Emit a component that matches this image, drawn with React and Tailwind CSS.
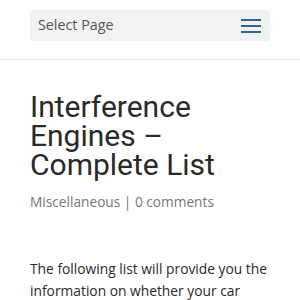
import React from 'react';

const Hamburger = () => (
  <svg width="20" height="16" viewBox="0 0 20 16" className="block">
    <rect x="0" y="1" width="20" height="2" fill="#2f6497" />
    <rect x="0" y="7" width="20" height="2" fill="#2f6497" />
    <rect x="0" y="13" width="20" height="2" fill="#2f6497" />
  </svg>
);

export default function App() {
  return (
    <div className="w-[300px] h-[300px] overflow-hidden bg-white">
      {/* Header */}
      <header className="h-[60px] border-b border-[#e6e6e6] pt-[10px]">
        <div className="mx-auto w-[240px] h-[31px] rounded-[3px] bg-[#f2f2f2] flex items-center justify-between pl-[8px] pr-[9px]">
          <span className="text-[14.3px] text-[#555] font-['Open_Sans',sans-serif] leading-none">Select Page</span>
          <Hamburger />
        </div>
      </header>

      {/* Post */}
      <article className="mx-auto w-[240px] pt-[32px]">
        <h1 className="text-[30px] leading-[29px] text-[#2a2a2a] font-['Roboto',sans-serif]">
          Interference Engines – Complete List
        </h1>
        <p className="mt-[13px] text-[13.7px] leading-[20px] text-[#777] font-['Open_Sans',sans-serif]">
          Miscellaneous | 0 comments
        </p>
        <p className="mt-[46px] text-[13.8px] leading-[22px] text-[#2a2a2a] font-['Open_Sans',sans-serif]">
          The following list will provide you the information on whether your car engine is an interference engine or not.
        </p>
      </article>
    </div>
  );
}
